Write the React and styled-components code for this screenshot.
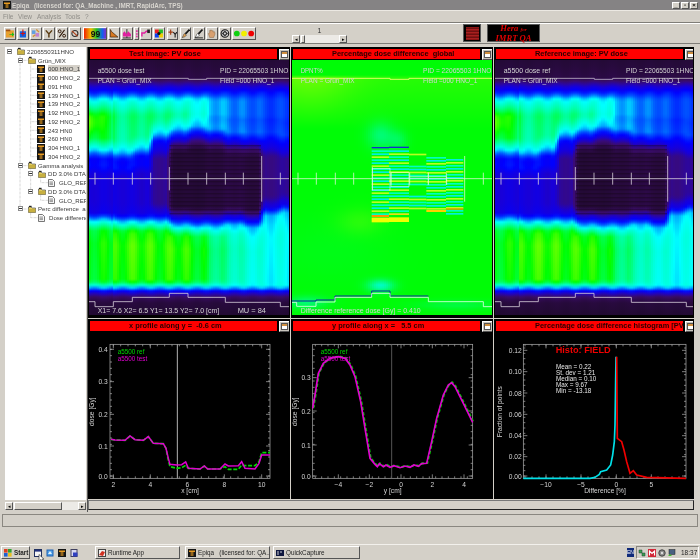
import React, { useMemo } from 'react'
import styled, { createGlobalStyle } from 'styled-components'

const GlobalStyle = createGlobalStyle`
  html, body { margin: 0; padding: 0; background: #d4d0c8; }
  #root { width: 700px; height: 560px; overflow: hidden; }
`

const SANS = '"Liberation Sans", Arial, sans-serif'

const Win = styled.div`
  width: 700px;
  height: 560px;
  display: flex;
  flex-direction: column;
  background: #d4d0c8;
  font-family: ${SANS};
  color: #222;
  overflow: hidden;
  filter: blur(0.3px);
`
const TitleBar = styled.div`
  height: 10px;
  flex: none;
  background: #858384;
  display: flex;
  align-items: center;
  padding: 0 2px 0 3px;
  color: #d8d5cf;
  font-size: 6.3px;
  font-weight: bold;
  white-space: pre;
`
const AppName = styled.span`
  margin-left: 1px;
  width: 22px;
`
const WinButtons = styled.div`
  margin-left: auto;
  display: flex;
  gap: 1px;
`
const WinButton = styled.div`
  width: 8px;
  height: 7px;
  background: #d4d0c8;
  border: 1px solid;
  border-color: #fff #555 #555 #fff;
  box-sizing: border-box;
  color: #000;
  font-size: 6px;
  line-height: 5px;
  text-align: center;
`
const MenuBar = styled.div`
  height: 12px;
  flex: none;
  display: flex;
  align-items: center;
  font-size: 6.5px;
  color: #8f8d88;
  padding-left: 3px;
  box-sizing: border-box;
  border-top: 1px solid #ece9e3;
`
const MenuItem = styled.span`
  width: ${p => p.$w}px;
`
const Toolbar = styled.div`
  height: 22px;
  flex: none;
  box-sizing: border-box;
  border-top: 1px solid #7f7d78;
  border-bottom: 1px solid #7f7d78;
  box-shadow: inset 0 1px 0 #fff;
  display: flex;
  align-items: flex-start;
  padding: 4px 0 0 4px;
  position: relative;
`
const ToolGroup = styled.div`
  display: flex;
  gap: 1.3px;
  width: 288px;
`
const ToolButton = styled.div`
  width: ${p => p.$w}px;
  height: 13px;
  box-sizing: border-box;
  background: #d4d0c8;
  border: 1px solid;
  border-color: #fff #555 #555 #fff;
  flex: none;
  display: flex;
  overflow: hidden;
`
const IconSvg = styled.svg`
  width: 100%;
  height: 100%;
  display: block;
`
const SliderBox = styled.div`
  width: 55px;
  display: flex;
  flex-direction: column;
  align-items: center;
  font-size: 7px;
  color: #333;
  margin-top: -1px;
`
const SliderValue = styled.div`
  height: 9px;
  line-height: 9px;
`
const HScroll = styled.div`
  display: flex;
  width: ${p => p.$w}px;
  height: 8px;
  background: #eceae6;
`
const ScrollBtn = styled.div`
  width: 8px;
  height: 8px;
  flex: none;
  box-sizing: border-box;
  background: #d4d0c8;
  border: 1px solid;
  border-color: #fff #555 #555 #fff;
  font-size: 5px;
  line-height: 6px;
  text-align: center;
  color: #000;
  margin-left: ${p => (p.$end ? 'auto' : '0')};
`
const ScrollThumb = styled(ScrollBtn)`
  width: ${p => p.$w}px;
  margin-left: 1px;
`
const Logos = styled.div`
  position: absolute;
  left: 463px;
  top: 1px;
  display: flex;
  gap: 6px;
`
const LogoBox = styled.div`
  width: ${p => p.$w}px;
  height: 18px;
  box-sizing: border-box;
  background: #000;
  border: 1px solid #5a5a5a;
  display: flex;
  align-items: center;
  justify-content: center;
`
const LogoSquare = styled.div`
  width: 13px;
  height: 13px;
  background: repeating-linear-gradient(0deg, #8a1414 0 1px, #a82020 1px 2px, #6e1010 2px 3px);
`
const LogoText = styled.div`
  color: #e00000;
  font-family: "Liberation Serif", serif;
  font-style: italic;
  font-weight: bold;
  font-size: 8.6px;
  line-height: 8px;
  text-align: center;
`
const LogoSmall = styled.span`
  font-size: 5px;
`
const Workspace = styled.div`
  height: 468px;
  flex: none;
  box-sizing: border-box;
  padding: 3px 3px 0 5px;
  display: flex;
  gap: 1px;
`
const TreePane = styled.div`
  width: 81px;
  flex: none;
  display: flex;
  flex-direction: column;
  height: 463px;
`
const Tree = styled.div`
  height: 453px;
  background: #fff;
  position: relative;
  overflow: hidden;
  box-sizing: border-box;
  font-size: 6.1px;
  color: #3a3a3a;
  white-space: pre;
`
const TreeLines = styled.svg`
  position: absolute;
  left: 0;
  top: 0;
`
const TreeRow = styled.div`
  height: 8.75px;
  display: flex;
  align-items: center;
  padding-left: ${p => p.$pad}px;
  position: relative;
`
const Expander = styled.div`
  width: 5px;
  height: 5px;
  box-sizing: border-box;
  border: 1px solid #8c8c8c;
  background: #fff;
  margin-right: 5px;
  flex: none;
  display: flex;
  align-items: center;
  justify-content: center;
  &::after {
    content: '';
    width: 3px;
    height: 1px;
    background: #333;
  }
`
const TreeIcon = styled.svg`
  width: ${p => p.$w || 8}px;
  height: 8px;
  flex: none;
  margin-right: ${p => p.$gap || 2}px;
`
const TreeText = styled.span`
  background: ${p => (p.$selected ? '#d4d0c8' : 'transparent')};
`
const TreeScroll = styled(HScroll)`
  width: 81px;
  margin-top: 2px;
`
const PanelArea = styled.div`
  width: 607px;
  flex: none;
  display: flex;
  flex-direction: column;
  border-left: 1px solid #555;
  box-sizing: border-box;
`
const PanelGrid = styled.div`
  display: grid;
  grid-template-columns: 203px 203px 200px;
  grid-template-rows: 271px 180px;
  row-gap: 1px;
`
const Panel = styled.div`
  background: #000;
  border: 1px solid #000;
  box-sizing: border-box;
  width: ${p => p.$w}px;
  overflow: hidden;
  display: flex;
  flex-direction: column;
`
const TitleRow = styled.div`
  height: 12px;
  flex: none;
  display: flex;
  align-items: center;
  gap: 2px;
  padding-left: 1px;
`
const RedBar = styled.div`
  width: 187px;
  height: 10px;
  flex: none;
  background: #ff0000;
  color: #2a0000;
  font-size: 7.4px;
  font-weight: bold;
  line-height: 10px;
  padding-left: 39px;
  box-sizing: border-box;
  white-space: pre;
  overflow: hidden;
`
const FrameButton = styled.div`
  width: 11px;
  height: 11px;
  flex: none;
  box-sizing: border-box;
  background: #c8c4bc;
  border: 1px solid;
  border-color: #fff #555 #555 #fff;
  padding: 1px;
  display: flex;
  &::after {
    content: '';
    flex: 1;
    background: linear-gradient(#d09040 0 2px, #fff 2px);
    border: 1px solid #555;
  }
`
const PlotSvg = styled.svg`
  display: block;
  flex: none;
`
const Label = styled.text`
  font-family: ${SANS};
  font-size: ${p => p.$s || 20}px;
  font-weight: ${p => p.$b || 'normal'};
  fill: ${p => p.$c || '#d4d4d4'};
  text-anchor: ${p => p.$a || 'start'};
`
const BottomStrip = styled.div`
  height: 10px;
  width: 606px;
  margin-top: 1px;
  box-sizing: border-box;
  border: 1px solid;
  border-color: #777 #222 #222 #777;
  background: #d4d0c8;
`
const StatusBar = styled.div`
  height: 13px;
  flex: none;
  margin: 2px 2px 0;
  box-sizing: border-box;
  border: 1px solid;
  border-color: #777 #fff #fff #777;
  outline: 1px solid #8a8780;
  outline-offset: -1px;
`
const Filler = styled.div`
  flex: 1;
`
const Taskbar = styled.div`
  height: 16px;
  flex: none;
  box-sizing: border-box;
  border-top: 1px solid #f2f0ec;
  display: flex;
  align-items: center;
  font-size: 6.3px;
  color: #222;
  padding-left: 1px;
`
const TaskButton = styled.div`
  width: ${p => p.$w}px;
  margin-left: ${p => p.$ml || 0}px;
  height: 13px;
  flex: none;
  box-sizing: border-box;
  border: 1px solid;
  border-color: #fff #555 #555 #fff;
  display: flex;
  align-items: center;
  gap: 2px;
  padding-left: 2px;
  white-space: pre;
  overflow: hidden;
  font-weight: ${p => (p.$bold ? 'bold' : 'normal')};
`
const TaskIcon = styled.svg`
  width: ${p => p.$s || 8}px;
  height: ${p => p.$s || 8}px;
  flex: none;
`
const QuickLaunch = styled.div`
  display: flex;
  gap: 4px;
  margin-left: 4px;
  position: relative;
`
const CursorMark = styled.svg`
  position: absolute;
  left: 4px;
  top: 5px;
  width: 7px;
  height: 9px;
`
const EnBox = styled.div`
  margin-left: auto;
  width: 7px;
  height: 9px;
  background: #102a7a;
  color: #fff;
  font-size: 5px;
  line-height: 9px;
  text-align: center;
  overflow: hidden;
`
const Tray = styled.div`
  width: 63px;
  height: 13px;
  margin-left: 2px;
  margin-right: 1px;
  box-sizing: border-box;
  border: 1px solid;
  border-color: #8a8780 #fff #fff #8a8780;
  display: flex;
  align-items: center;
  gap: 2px;
  padding-left: 1px;
`
const Clock = styled.span`
  margin-left: 3px;
  font-size: 6.5px;
`

// colour table of the dose images
const MAP = [
  [0, [18, 8, 24]], [0.06, [40, 10, 62]], [0.12, [60, 12, 112]], [0.2, [24, 0, 216]], [0.27, [0, 0, 255]],
  [0.36, [0, 96, 255]], [0.45, [0, 255, 255]], [0.55, [0, 255, 176]], [0.65, [0, 255, 80]], [0.72, [0, 255, 0]], [0.86, [170, 255, 0]],
]
function doseColor(v) {
  const t = Math.max(0, Math.min(0.86, v))
  for (let i = 1; i < MAP.length; i++) {
    if (t <= MAP[i][0]) {
      const [a, ca] = MAP[i - 1]
      const [b, cb] = MAP[i]
      const k = (t - a) / (b - a)
      return `rgb(${ca.map((c, j) => Math.round(c + (cb[j] - c) * k)).join(',')})`
    }
  }
  return 'rgb(170,255,0)'
}

const LEAVES = [
  { x0: 0, x1: 85, tp: 0.7, te: 340, cv: 0.21, be: 525, bp: 0.72 },
  { x0: 85, x1: 142, tp: 0.6, te: 345, cv: 0.21, be: 530, bp: 0.76 },
  { x0: 142, x1: 197, tp: 0.62, te: 335, cv: 0.2, be: 530, bp: 0.77 },
  { x0: 197, x1: 253, tp: 0.61, te: 290, cv: 0.15, be: 530, bp: 0.75 },
  { x0: 253, x1: 309, tp: 0.58, te: 275, cv: 0.05, be: 542, bp: 0.76 },
  { x0: 309, x1: 365, tp: 0.5, te: 265, cv: 0.05, be: 545, bp: 0.72 },
  { x0: 365, x1: 421, tp: 0.41, te: 272, cv: 0.06, be: 545, bp: 0.62 },
  { x0: 421, x1: 475, tp: 0.38, te: 282, cv: 0.07, be: 540, bp: 0.55 },
  { x0: 475, x1: 530, tp: 0.36, te: 285, cv: 0.06, be: 548, bp: 0.5 },
  { x0: 530, x1: 586, tp: 0.33, te: 285, cv: 0.14, be: 510, bp: 0.47 },
  { x0: 586, x1: 700, tp: 0.33, te: 292, cv: 0.15, be: 500, bp: 0.47 },
]

function lerpNodes(nodes, y) {
  if (y <= nodes[0][0]) return nodes[0][1]
  for (let i = 1; i < nodes.length; i++) {
    if (y <= nodes[i][0]) {
      const [a, va] = nodes[i - 1]
      const [b, vb] = nodes[i]
      return va + ((vb - va) * (y - a)) / (b - a || 1)
    }
  }
  return nodes[nodes.length - 1][1]
}
function leafValue(l, y) {
  return lerpNodes([
    [45, 0.05], [100, 0.07], [125, 0.2], [140, 0.28], [165, Math.min(0.46, l.tp)], [212, l.tp],
    [Math.max(218, l.te - 60), l.tp * 0.95], [l.te - 22, Math.min(0.42, l.tp)], [l.te, 0.27], [l.te + 25, l.cv + 0.07], [l.te + 50, l.cv],
    [l.be - 55, l.cv], [l.be - 22, 0.23], [l.be, 0.42], [l.be + 30, l.bp * 0.95], [l.be + 70, l.bp],
    [708, l.bp * 0.97], [725, 0.46], [738, 0.27], [752, 0.12], [770, 0.06], [813, 0.04],
  ], y)
}
function doseAt(x, y) {
  const i = LEAVES.findIndex(l => x < l.x1)
  const l = LEAVES[i < 0 ? LEAVES.length - 1 : i]
  let v = leafValue(l, y)
  const toEnd = l.x1 - x
  const toStart = x - l.x0
  if (toEnd < 10 && LEAVES[i + 1]) v += (leafValue(LEAVES[i + 1], y) - v) * (0.5 - toEnd / 20)
  else if (toStart < 10 && LEAVES[i - 1]) v += (leafValue(LEAVES[i - 1], y) - v) * (0.5 - toStart / 20)
  v *= 1 + 0.05 * Math.cos((2 * Math.PI * (x - l.x0)) / 56)
  v += 0.11 * Math.exp(-(((x - 18) / 28) ** 2) - ((y - 235) / 36) ** 2)
  return v
}
const gauss = (x, y, cx, cy, rx, ry) => Math.exp(-(((x - cx) / rx) ** 2) - ((y - cy) / ry) ** 2)

function diffAt(x, y) {
  let r = 0
  if (y > 95 && y < 250) r += (40 + 70 * Math.exp(-(((x - 60) / 130) ** 2))) * (1 - (y - 95) / 155)
  r += 40 * gauss(x, y, 210, 530, 70, 40)
  const b = 6 + 110 * gauss(x, y, 272, 272, 40, 40) + 70 * gauss(x, y, 325, 285, 28, 28)
    + 190 * gauss(x, y, 272, 722, 40, 18) + 110 * gauss(x, y, 50, 772, 60, 18) + 60 * gauss(x, y, 500, 780, 120, 14)
    + 16 * gauss(x, y, 120, 620, 200, 100)
  return `rgb(${Math.round(r)},${252},${Math.round(b)})`
}

const STEP_TEST = '12,770 30,770 30,785 85,785 85,770 142,770 142,757 253,757 253,745 309,745 309,757 421,757 421,772 586,772 586,785 620,785'

function HeatSlices({ id, x0, x1, colorAt, y0 = 45, y1 = 813 }) {
  const slices = useMemo(() => {
    const out = []
    for (let x = x0; x < x1; x += 6) {
      const stops = []
      for (let y = y0; y <= y1; y += 9) stops.push([(y - y0) / (y1 - y0), colorAt(x + 3, y)])
      out.push({ x, stops })
    }
    return out
  }, [x0, x1, y0, y1])
  return (
    <>
      <defs>
        {slices.map(s => (
          <linearGradient key={s.x} id={`${id}${s.x}`} x1="0" y1="0" x2="0" y2="1">
            {s.stops.map(([o, c]) => <stop key={o} offset={o} stopColor={c} />)}
          </linearGradient>
        ))}
      </defs>
      {slices.map(s => <rect key={s.x} x={s.x} y={y0} width="6.4" height={y1 - y0} fill={`url(#${id}${s.x})`} />)}
    </>
  )
}

function DarkStripes({ dx }) {
  const rows = []
  for (let y = 300; y < 515; y += 12) rows.push(y)
  return rows.map(y => <rect key={y} x={254 + dx} y={y} width={274} height="4" fill="#140614" opacity="0.38" />)
}

// hairlines over the images: centre axis with the leaf ticks
function Crosshair({ dx, x0, x1, color = '#d8d0dc' }) {
  const ticks = [30, 85, 142, 197, 309, 365, 421, 475, 586]
  return (
    <g stroke={color} strokeWidth="2.4" fill="none">
      <line x1={x0} x2={x1} y1="401" y2="401" />
      {ticks.map(t => <line key={t} x1={t + dx} x2={t + dx} y1="383" y2="419" />)}
      <line x1={253 + dx} x2={253 + dx} y1="366" y2="436" />
      <line x1={530 + dx} x2={530 + dx} y1="333" y2="470" />
    </g>
  )
}

function DoseImage({ id, x0, x1, dx, name, children }) {
  return (
    <PlotSvg width={x1 - x0 === 594 ? 198 : 200} height="255" viewBox={`${x0} 45 ${x1 - x0} 765`} preserveAspectRatio="none">
      <HeatSlices id={id} x0={x0} x1={x1} colorAt={(x, y) => doseColor(doseAt(x - dx, y))} />
      <DarkStripes dx={dx} />
      <polyline points={`${x0},100 ${310 + dx},100 ${310 + dx},103 ${365 + dx},103 ${365 + dx},100 ${x1},100`} stroke="#c4bccc" strokeWidth="2.4" fill="none" />
      <polyline points={STEP_TEST.split(' ').map(p => { const [a, b] = p.split(','); return `${+a + dx},${b}` }).join(' ')} stroke="#d8d0dc" strokeWidth="2.4" fill="none" />
      <Crosshair dx={dx} x0={x0} x1={x1} />
      <Label x={38 + dx} y={85} textLength={140} lengthAdjust="spacingAndGlyphs">{name}</Label>
      <Label x={38 + dx} y={115} textLength={162} lengthAdjust="spacingAndGlyphs">PLAN = Grün_MIX</Label>
      <Label x={405 + dx} y={85} textLength={205} lengthAdjust="spacingAndGlyphs">PID = 22065503 1HNO</Label>
      <Label x={405 + dx} y={115} textLength={163} lengthAdjust="spacingAndGlyphs">Field =000 HNO_1</Label>
      {children}
    </PlotSvg>
  )
}

const STRIPE_COLS = [
  { x0: 245, x1: 297, y0: 316, y1: 510 },
  { x0: 297, x1: 357, y0: 316, y1: 510 },
  { x0: 357, x1: 409, y0: 326, y1: 490 },
  { x0: 409, x1: 468, y0: 336, y1: 490 },
  { x0: 468, x1: 520, y0: 342, y1: 512 },
]
const STRIPE_COLORS = ['#b8ff20', '#00ffc0', '#00f0e0']

function DiffStripes() {
  const out = []
  STRIPE_COLS.forEach((c, i) => {
    let n = i
    for (let y = c.y0; y < c.y1; y += 9) {
      n++
      if (i === 2 && ((y > 334 && y < 362) || (y > 424 && y < 450))) continue
      out.push(<rect key={`${i}-${y}`} x={c.x0} y={y} width={c.x1 - c.x0} height="5" fill={STRIPE_COLORS[n % 3]} />)
    }
  })
  return out
}

function DiffImage() {
  return (
    <PlotSvg width="200" height="255" viewBox="6 45 600 765" preserveAspectRatio="none">
      <HeatSlices id="diff" x0={6} x1={606} colorAt={diffAt} />
      <DiffStripes />
      <rect x="245" y="306" width="52" height="4" fill="#1030d0" />
      <rect x="297" y="305" width="60" height="4" fill="#1030d0" />
      <rect x="245" y="510" width="52" height="6" fill="#ff9000" />
      <rect x="245" y="518" width="52" height="14" fill="#f0ff00" />
      <rect x="297" y="505" width="60" height="5" fill="#f0e000" />
      <rect x="297" y="517" width="60" height="14" fill="#f0ff00" />
      <rect x="409" y="495" width="59" height="6" fill="#ffd000" />
      <rect x="468" y="490" width="52" height="4" fill="#ff9000" />
      <polyline points="6,100 300,100 300,103 357,103 357,100 606,100" stroke="#f6ff70" strokeWidth="2.6" fill="none" />
      <polyline points="6,768 78,768 78,765 135,765 135,753 245,753 245,738 300,738 300,753 415,753" stroke="#1020a0" strokeWidth="3" fill="none" />
      <polyline points="6,772 20,772 20,784 78,784 78,771 135,771 135,757 245,757 245,745 300,745 300,757 415,757 415,770 580,770 580,785 606,785" stroke="#e8fff0" strokeWidth="2.4" fill="none" />
      <g stroke="#f2fff0" strokeWidth="2.2" fill="none" opacity="0.75">
        <rect x="247" y="370" width="53" height="65" />
        <rect x="303" y="383" width="54" height="42" />
        <path d="M357 395H470M415 383V420M470 395V420" />
      </g>
      <Crosshair dx={-6} x0={6} x1={606} color="#d8f8d0" />
      <Label x={32} y={85} textLength={66} lengthAdjust="spacingAndGlyphs">DPNT%</Label>
      <Label x={32} y={115} textLength={162} lengthAdjust="spacingAndGlyphs">PLAN = Grün_MIX</Label>
      <Label x={399} y={85} textLength={205} lengthAdjust="spacingAndGlyphs">PID = 22065503 1HNO</Label>
      <Label x={399} y={115} textLength={163} lengthAdjust="spacingAndGlyphs">Field =000 HNO_1</Label>
      <Label x={32} y={804} textLength={360} lengthAdjust="spacingAndGlyphs">Difference reference dose [Gy] =    0.410</Label>
    </PlotSvg>
  )
}

// axes box with the tick marks drawn inwards, all in crop units
function AxisBox({ x0, x1, y0, y1, xMajor, yMajor, xStep, yStep }) {
  const lines = []
  for (let x = xStep.from; x < x1; x += xStep.by) {
    lines.push(<path key={`x${x}`} d={`M${x} ${y1}v-6M${x} ${y0}v6`} />)
  }
  for (let y = yStep.from; y > y0; y -= yStep.by) {
    lines.push(<path key={`y${y}`} d={`M${x0} ${y}h6M${x1} ${y}h-6`} />)
  }
  return (
    <g stroke="#a8a8a8" strokeWidth="2.2" fill="none">
      <rect x={x0} y={y0} width={x1 - x0} height={y1 - y0} />
      {lines}
      {xMajor.map(x => <path key={x} d={`M${x} ${y1}v-12M${x} ${y0}v12`} />)}
      {yMajor.map(y => <path key={y} d={`M${x0} ${y}h12M${x1} ${y}h-12`} />)}
    </g>
  )
}

const X_PROFILE_TEST = '78,373 90,375 120,376 135,363 150,374 175,376 190,365 205,385 235,386 243,400 250,430 255,448 275,450 290,449 302,441 310,460 345,462 358,453 368,462 405,462 420,447 430,453 460,452 470,440 480,460 510,462 522,445 530,420 555,420'
const X_PROFILE_REF = '78,373 90,375 120,376 135,363 150,374 175,376 190,365 205,385 235,386 243,400 250,436 255,455 275,460 290,458 302,451 310,460 345,462 358,453 368,462 405,462 420,455 430,463 460,463 470,450 480,452 510,452 522,440 530,413 555,413'

function XProfile() {
  return (
    <PlotSvg width="200" height="165" viewBox="12 51 600 495" preserveAspectRatio="none">
      <AxisBox x0={75} x1={555} y0={88} y1={490} xMajor={[85, 196, 307, 418, 530]} yMajor={[483, 393, 298, 200, 103]} xStep={{ from: 85, by: 22 }} yStep={{ from: 483, by: 19 }} />
      <line x1="277" x2="277" y1="88" y2="490" stroke="#b4b4b4" strokeWidth="3" />
      <polyline points={X_PROFILE_REF} stroke="#00d800" strokeWidth="5" strokeDasharray="12 5" fill="none" />
      <polyline points={X_PROFILE_TEST} stroke="#e000d0" strokeWidth="4.5" fill="none" />
      {['0.0', '0.1', '0.2', '0.3', '0.4'].map((t, i) => (
        <Label key={t} x={68} y={[491, 401, 306, 208, 111][i]} $a="end">{t}</Label>
      ))}
      {['2', '4', '6', '8', '10'].map((t, i) => (
        <Label key={t} x={[85, 196, 307, 418, 530][i]} y={517} $a="middle">{t}</Label>
      ))}
      <Label x={315} y={535} $a="middle">x [cm]</Label>
      <Label x={28} y={290} $a="middle" transform="rotate(-90 28 290)">dose [Gy]</Label>
      <Label x={98} y={118} $c="#00d800" $s={19}>a5500 ref</Label>
      <Label x={98} y={139} $c="#e000d0" $s={19}>a5500 test</Label>
    </PlotSvg>
  )
}

const Y_PROFILE = '68,280 75,240 85,175 100,145 120,130 145,125 165,130 180,150 195,185 212,260 225,340 240,430 255,448 262,455 268,446 280,455 288,450 300,457 312,452 330,458 345,453 360,457 372,450 385,454 395,446 410,445 425,380 440,310 460,240 475,210 485,203 495,215 520,265 548,322'

function YProfile() {
  return (
    <PlotSvg width="200" height="165" viewBox="6 51 600 495" preserveAspectRatio="none">
      <AxisBox x0={68} x1={548} y0={88} y1={490} xMajor={[145, 238, 333, 427, 522]} yMajor={[483, 390, 288, 188]} xStep={{ from: 76, by: 19 }} yStep={{ from: 483, by: 19 }} />
      <line x1="305" x2="305" y1="88" y2="490" stroke="#555" strokeWidth="3" />
      <polyline points={Y_PROFILE} stroke="#00c800" strokeWidth="6" strokeDasharray="10 6" fill="none" transform="translate(2 -1)" />
      <polyline points={Y_PROFILE} stroke="#e000d0" strokeWidth="5" fill="none" />
      {['0.0', '0.1', '0.2', '0.3'].map((t, i) => (
        <Label key={t} x={62} y={[491, 398, 296, 196][i]} $a="end">{t}</Label>
      ))}
      {['−4', '−2', '0', '2', '4'].map((t, i) => (
        <Label key={t} x={[145, 238, 333, 427, 522][i]} y={515} $a="middle">{t}</Label>
      ))}
      <Label x={308} y={535} $a="middle">y [cm]</Label>
      <Label x={22} y={290} $a="middle" transform="rotate(-90 22 290)">dose [Gy]</Label>
      <Label x={92} y={116} $c="#00d800" $s={19}>a5500 ref</Label>
      <Label x={92} y={137} $c="#e000d0" $s={19}>a5500 test</Label>
    </PlotSvg>
  )
}

const HISTO_NEG = '100,490 300,490 315,487 328,478 332,470 350,465 362,450 368,420 373,380 375,330 378,125'
const HISTO_POS = '380,125 382,370 395,380 402,405 410,440 420,475 430,467 440,480 470,487 588,490'
const HISTO_STATS = ['Mean =  0.22', 'St. dev =  1.21', 'Median =  0.10', 'Max =    9.67', 'Min =  -13.18']

function Histogram() {
  return (
    <PlotSvg width="198" height="165" viewBox="15 51 594 495" preserveAspectRatio="none">
      <AxisBox x0={100} x1={588} y0={88} y1={490} xMajor={[168, 273, 379, 484]} yMajor={[483, 425, 362, 298, 234, 170, 106]} xStep={{ from: 105, by: 21 }} yStep={{ from: 483, by: 16 }} />
      <polyline points={HISTO_NEG} stroke="#00e0e8" strokeWidth="5" fill="none" />
      <polyline points={HISTO_POS} stroke="#f00000" strokeWidth="5" fill="none" />
      {['0.00', '0.02', '0.04', '0.06', '0.08', '0.10', '0.12'].map((t, i) => (
        <Label key={t} x={95} y={[491, 433, 370, 306, 242, 178, 114][i]} $a="end">{t}</Label>
      ))}
      {['−10', '−5', '0', '5'].map((t, i) => (
        <Label key={t} x={[168, 273, 379, 484][i]} y={515} $a="middle">{t}</Label>
      ))}
      <Label x={345} y={534} $a="middle" textLength={125} lengthAdjust="spacingAndGlyphs">Difference [%]</Label>
      <Label x={37} y={290} $a="middle" transform="rotate(-90 37 290)">Fraction of points</Label>
      <Label x={197} y={115} $c="#f00000" $s={27} $b="bold" textLength={165} lengthAdjust="spacingAndGlyphs">Histo: FIELD</Label>
      {HISTO_STATS.map((t, i) => (
        <Label key={t} x={198} y={162 + i * 18} $s={19} $c="#e8e8e8">{t}</Label>
      ))}
    </PlotSvg>
  )
}

// tree node icons
const EpiqaGlyph = () => (
  <>
    <rect width="8" height="8" fill="#151515" />
    <path d="M1 1.5h6v1.5H5.3V7H4.4V3H3.6V7H2.7V3H1z" fill="#e89a20" />
  </>
)
const FolderGlyph = () => (
  <>
    <path d="M0.5 2H3L4 3H7.5V7.5H0.5z" fill="#e6d060" stroke="#555" strokeWidth="0.7" />
    <rect x="0.6" y="4" width="6.8" height="3.3" fill="#c8b040" />
    <rect x="1" y="0.8" width="2.6" height="1.2" fill="#222" />
  </>
)
const DocGlyph = () => (
  <>
    <path d="M0.5 0.5H4.5L6.5 2.5V7.5H0.5z" fill="#f8f8f8" stroke="#555" strokeWidth="0.8" />
    <path d="M1.5 3H5M1.5 4.3H5M1.5 5.6H5" stroke="#555" strokeWidth="0.6" />
  </>
)

const TREE_ITEMS = ['000 HNO_1', '000 HNO_2', '091 HN0', '139 HNO_1', '139 HNO_2', '192 HNO_1', '192 HNO_2', '243 HN0', '260 HN0', '304 HNO_1', '304 HNO_2']
const TREE = [
  { pad: 2, box: true, icon: 'folder', text: '2206550311HNO' },
  { pad: 13, box: true, icon: 'folder', text: 'Grün_MIX' },
  ...TREE_ITEMS.map((text, i) => ({ pad: 32, icon: 'epiqa', text, selected: i === 0, gap: 3 })),
  { pad: 13, box: true, icon: 'folder', text: 'Gamma analysis' },
  { pad: 23, box: true, icon: 'folder', text: 'DD 3.0% DTA' },
  { pad: 43, icon: 'doc', text: 'GLO_REF', gap: 3 },
  { pad: 23, box: true, icon: 'folder', text: 'DD 3.0% DTA' },
  { pad: 43, icon: 'doc', text: 'GLO_REF', gap: 3 },
  { pad: 13, box: true, icon: 'folder', text: 'Perc difference  ar' },
  { pad: 33, icon: 'doc', text: 'Dose differenc', gap: 3 },
]

function TreeNode({ node }) {
  const glyph = node.icon === 'folder' ? <FolderGlyph /> : node.icon === 'doc' ? <DocGlyph /> : <EpiqaGlyph />
  return (
    <TreeRow $pad={node.pad}>
      {node.box && <Expander />}
      <TreeIcon viewBox="0 0 8 8" $gap={node.gap}>{glyph}</TreeIcon>
      <TreeText $selected={node.selected}>{node.text}</TreeText>
    </TreeRow>
  )
}

// toolbar glyphs, one small drawing per button
const TOOLS = [
  <><rect x="1" y="2" width="9" height="8" fill="#e8a030" /><rect x="1" y="1" width="5" height="2" fill="#a05010" /><path d="M5 6h3V4l2.5 2.5L8 9V7H5z" fill="#18c018" /></>,
  <><rect x="2" y="3" width="7" height="7" fill="#1060e0" /><path d="M5.5 1v7M3 5.5h5" stroke="#d01010" strokeWidth="1.2" /></>,
  <><rect x="1" y="2" width="4" height="4" fill="#60a0e0" /><rect x="5" y="5" width="4" height="4" fill="#c080d0" /><path d="M6 1l3 3M2 9l3-2" stroke="#d09030" strokeWidth="1.4" /></>,
  <path d="M2 2l3.5 4L9 2M5.5 5.5V10" stroke="#5a3a10" strokeWidth="1.6" fill="none" />,
  <><path d="M8.5 1.5L2.5 9.5" stroke="#301808" strokeWidth="1.2" /><circle cx="3" cy="3" r="1.6" fill="none" stroke="#301808" strokeWidth="1.1" /><circle cx="8" cy="8" r="1.6" fill="none" stroke="#301808" strokeWidth="1.1" /></>,
  <><circle cx="5.5" cy="5.5" r="3.4" fill="none" stroke="#303030" strokeWidth="1.2" /><path d="M2 2.5l6.5 6" stroke="#b03a10" strokeWidth="1.2" /></>,
  <><defs><linearGradient id="toolRainbow"><stop offset="0" stopColor="#f02000" /><stop offset="0.3" stopColor="#f0c000" /><stop offset="0.55" stopColor="#20c020" /><stop offset="0.8" stopColor="#1060f0" /><stop offset="1" stopColor="#a020c0" /></linearGradient></defs><rect width="24" height="11" fill="url(#toolRainbow)" /><Label x="7" y="9" $s={9} $b="bold" $c="#101010">99</Label></>,
  <path d="M1.5 1v8.5h8.5L3 3.5z" fill="#d87820" stroke="#402008" strokeWidth="0.8" />,
  <><path d="M5.5 0.5v10M1 10.5h9" stroke="#222" strokeWidth="1" /><path d="M1 5l2-2 2 3 2-3 3 3v3H1z" fill="#e020a0" /></>,
  <path d="M2.5 1v2.5M2.5 5v2M2.5 8.5v2" stroke="#e020a0" strokeWidth="2" />,
  <><path d="M1 9V5h3l2-2h3" stroke="#e020a0" strokeWidth="1.6" fill="none" /><path d="M7 1h3v4H7z" fill="#222" /></>,
  <><rect x="1" y="1" width="4.5" height="4.5" fill="#f02020" /><rect x="5.5" y="1" width="4.5" height="4.5" fill="#20c020" /><rect x="1" y="5.5" width="4.5" height="4.5" fill="#1040f0" /><rect x="5.5" y="5.5" width="4.5" height="4.5" fill="#f0d000" /><circle cx="5.5" cy="5.5" r="1.8" fill="#101010" /></>,
  <><path d="M3 1v6M0.5 4h5" stroke="#a03a10" strokeWidth="1.3" /><path d="M6 4l2 2.5L10 4M8 6.5V10" stroke="#181818" strokeWidth="1.2" fill="none" /></>,
  <><path d="M9.5 1L5 6" stroke="#181818" strokeWidth="2" /><path d="M1 10c2-1 1-3 3-4.5l2 2C5 9 3 10 1 10z" fill="#e0a050" stroke="#181818" strokeWidth="0.5" /></>,
  <><path d="M9.5 1L5 6" stroke="#181818" strokeWidth="2" /><path d="M1 10c2-1 1-3 3-4.5l2 2C5 9 3 10 1 10z" fill="#fff" stroke="#181818" strokeWidth="0.6" /><path d="M1 10.4h9" stroke="#181818" /></>,
  <path d="M3 10L1.5 5.5 3 5V2l1 .5V1.5l1.2.2.3.8L7 2.5V4l1.5-.5L9 6l-1.5 4z" fill="#d8a070" stroke="#806040" strokeWidth="0.5" />,
  <><circle cx="5.5" cy="5.5" r="4.3" fill="#d8d8d8" stroke="#181818" strokeWidth="1.2" /><path d="M5.5 2l3.5 3.5-3.5 3.5L2 5.5z" fill="#303030" /><circle cx="5.5" cy="5.5" r="1.2" fill="#d8d8d8" /></>,
  <><circle cx="4" cy="5.5" r="3" fill="#10d010" /><circle cx="11.5" cy="5.5" r="3" fill="#f0f000" /><circle cx="19" cy="5.5" r="3" fill="#f00000" /></>,
]
const TOOL_WIDTHS = { 6: 24, 9: 5, 17: 24 }

function ToolBarIcons() {
  return (
    <ToolGroup>
      {TOOLS.map((glyph, i) => {
        const w = TOOL_WIDTHS[i] || 11.8
        return (
          <ToolButton key={i} $w={w}>
            <IconSvg viewBox={`0 0 ${Math.round(w - 1)} 11`}>{glyph}</IconSvg>
          </ToolButton>
        )
      })}
    </ToolGroup>
  )
}

export default function App() {
  return (
    <Win>
      <GlobalStyle />
      <TitleBar>
        <TaskIcon viewBox="0 0 8 8"><EpiqaGlyph /></TaskIcon>
        <AppName>Epiqa</AppName>
        <span>(licensed for: QA_Machine , IMRT, RapidArc, TPS)</span>
        <WinButtons>
          <WinButton>_</WinButton>
          <WinButton>▫</WinButton>
          <WinButton>×</WinButton>
        </WinButtons>
      </TitleBar>
      <MenuBar>
        <MenuItem $w={15}>File</MenuItem>
        <MenuItem $w={19}>View</MenuItem>
        <MenuItem $w={28}>Analysis</MenuItem>
        <MenuItem $w={20}>Tools</MenuItem>
        <MenuItem $w={10}>?</MenuItem>
      </MenuBar>
      <Toolbar>
        <ToolBarIcons />
        <SliderBox>
          <SliderValue>1</SliderValue>
          <HScroll $w={55}>
            <ScrollBtn>◂</ScrollBtn>
            <ScrollThumb $w={4} />
            <ScrollBtn $end>▸</ScrollBtn>
          </HScroll>
        </SliderBox>
        <Logos>
          <LogoBox $w={18}><LogoSquare /></LogoBox>
          <LogoBox $w={53}>
            <LogoText>Hera <LogoSmall>for</LogoSmall><br />IMRT QA</LogoText>
          </LogoBox>
        </Logos>
      </Toolbar>
      <Workspace>
        <TreePane>
          <Tree>
            <TreeLines width="81" height="180" viewBox="15 21 243 540">
              <g stroke="#a8a8a8" strokeWidth="2" strokeDasharray="2 2" fill="none">
                <path d="M29 42V35M60 48V507M60 61H82M60 377H82M60 507H82" />
                <path d="M92 70V350M92 87H113M92 113H113M92 139H113M92 166H113M92 192H113M92 218H113M92 245H113M92 271H113M92 297H113M92 324H113M92 350H113" />
                <path d="M92 385V455M122 412V428H145M122 465V481H145M92 515V533H113" />
              </g>
            </TreeLines>
            {TREE.map((node, i) => <TreeNode key={i} node={node} />)}
          </Tree>
          <TreeScroll $w={81}>
            <ScrollBtn>◂</ScrollBtn>
            <ScrollThumb $w={48} />
            <ScrollBtn $end>▸</ScrollBtn>
          </TreeScroll>
        </TreePane>
        <PanelArea>
          <PanelGrid>
            <Panel $w={202}>
              <TitleRow><RedBar>Test image: PV dose</RedBar><FrameButton /></TitleRow>
              <DoseImage id="test" x0={12} x1={612} dx={0} name="a5500 dose test">
                <Label x={38} y={804} textLength={365} lengthAdjust="spacingAndGlyphs">X1=  7.6  X2=  6.5  Y1=  13.5  Y2=  7.0  [cm]</Label>
                <Label x={458} y={804} textLength={85} lengthAdjust="spacingAndGlyphs">MU =  84</Label>
              </DoseImage>
            </Panel>
            <Panel $w={202}>
              <TitleRow><RedBar>Percentage dose difference  global</RedBar><FrameButton /></TitleRow>
              <DiffImage />
            </Panel>
            <Panel $w={200}>
              <TitleRow><RedBar>Reference image: PV dose</RedBar><FrameButton /></TitleRow>
              <DoseImage id="ref" x0={15} x1={609} dx={3} name="a5500 dose ref" />
            </Panel>
            <Panel $w={202}>
              <TitleRow><RedBar>x profile along y =  -0.6 cm</RedBar><FrameButton /></TitleRow>
              <XProfile />
            </Panel>
            <Panel $w={202}>
              <TitleRow><RedBar>y profile along x =   5.5 cm</RedBar><FrameButton /></TitleRow>
              <YProfile />
            </Panel>
            <Panel $w={200}>
              <TitleRow><RedBar>Percentage dose difference histogram [PV</RedBar><FrameButton /></TitleRow>
              <Histogram />
            </Panel>
          </PanelGrid>
          <BottomStrip />
        </PanelArea>
      </Workspace>
      <StatusBar />
      <Filler />
      <Taskbar>
        <TaskButton $w={29} $bold>
          <TaskIcon viewBox="0 0 8 8">
            <rect width="3.6" height="3.6" fill="#e04020" /><rect x="4" width="3.6" height="3.6" fill="#30a030" />
            <rect y="4" width="3.6" height="3.6" fill="#2060d0" /><rect x="4" y="4" width="3.6" height="3.6" fill="#e8c020" />
          </TaskIcon>
          Start
        </TaskButton>
        <QuickLaunch>
          <TaskIcon viewBox="0 0 8 8"><rect x="0.5" y="0.5" width="7" height="7" fill="#f4f4f4" stroke="#203060" /><rect x="1" y="1" width="6" height="1.6" fill="#203080" /></TaskIcon>
          <TaskIcon viewBox="0 0 8 8"><rect x="1" y="1" width="6" height="6" fill="#50a0e8" stroke="#2060b0" /><path d="M2 5l2-3 2 3z" fill="#e0f0ff" /></TaskIcon>
          <TaskIcon viewBox="0 0 8 8"><EpiqaGlyph /></TaskIcon>
          <TaskIcon viewBox="0 0 8 8"><rect x="1" y="0.5" width="6" height="7" fill="#d8d8f0" stroke="#404060" /><rect x="3" y="3.5" width="4.5" height="4" fill="#3040c0" /></TaskIcon>
          <CursorMark viewBox="0 0 7 9"><path d="M1 0.5V7l1.6-1.4L4 8.5l1.2-.5-1.3-2.8H6z" fill="#fff" stroke="#222" strokeWidth="0.6" /></CursorMark>
        </QuickLaunch>
        <TaskButton $w={85} $ml={17}>
          <TaskIcon viewBox="0 0 8 8"><rect x="0.5" y="0.5" width="7" height="7" fill="#f0f0f0" stroke="#444" /><path d="M1 6l3-4 3 1-2 4z" fill="#d03020" /></TaskIcon>
          Runtime App
        </TaskButton>
        <TaskButton $w={85} $ml={5}>
          <TaskIcon viewBox="0 0 8 8"><EpiqaGlyph /></TaskIcon>
          {'Epiqa   (licensed for: QA...'}
        </TaskButton>
        <TaskButton $w={87} $ml={3}>
          <TaskIcon viewBox="0 0 8 8"><rect y="1" width="8" height="6" fill="#101840" /><path d="M1 3h2M4 3h2M1 5h2" stroke="#fff" strokeWidth="0.8" /></TaskIcon>
          QuickCapture
        </TaskButton>
        <EnBox>EN</EnBox>
        <Tray>
          <TaskIcon viewBox="0 0 8 8"><path d="M1 1h3v3H1zM4 4h3v3H4z" fill="#38a050" stroke="#204030" strokeWidth="0.5" /></TaskIcon>
          <TaskIcon viewBox="0 0 8 8"><rect width="8" height="8" fill="#d02838" /><path d="M1.5 6.5V2L4 4.5 6.5 2v4.5" stroke="#fff" strokeWidth="1.1" fill="none" /></TaskIcon>
          <TaskIcon viewBox="0 0 8 8"><circle cx="4" cy="4" r="3.2" fill="#888" stroke="#444" /><circle cx="4" cy="4" r="1.2" fill="#ddd" /></TaskIcon>
          <TaskIcon viewBox="0 0 8 8"><rect x="1" y="0.5" width="6" height="5" fill="#486080" stroke="#222" strokeWidth="0.5" /><path d="M0 7l2-2 2 2" fill="#40c030" /></TaskIcon>
          <Clock>18:37</Clock>
        </Tray>
      </Taskbar>
    </Win>
  )
}
